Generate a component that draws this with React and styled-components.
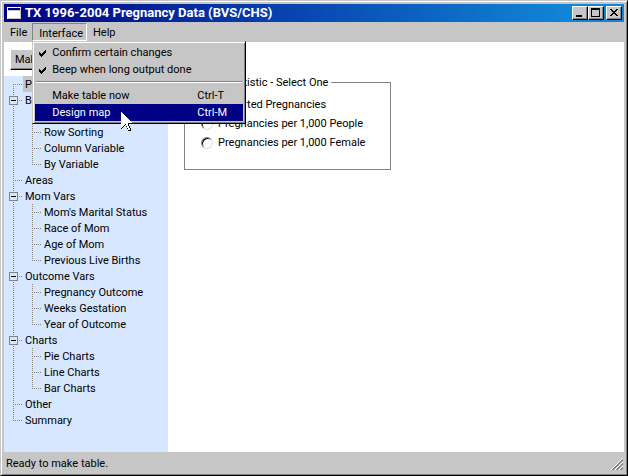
import React, { useState } from 'react';
import styled, { createGlobalStyle, css } from 'styled-components';

const face = '#c6c6c6';
const shade = '#848484';
const navy = '#000084';
const paleBlue = '#d6e7ff';

const GlobalStyle = createGlobalStyle`
  * { box-sizing: border-box; }
  body {
    margin: 0;
    background: ${face};
  }
  body, button, input {
    font-family: Roboto, "Liberation Sans", Arial, sans-serif;
    font-size: 11px;
    line-height: 16px;
    color: #000;
  }
`;

const Window = styled.div`
  display: flex;
  flex-direction: column;
  min-height: 100vh;
  padding: 3px 3px 2px;
  background: ${face};
  border: 1px solid;
  border-color: ${face} #000 #000 ${face};
  box-shadow: inset 1px 1px #fff, inset -1px -1px ${shade};
`;

const TitleBar = styled.header`
  display: flex;
  align-items: center;
  gap: 4px;
  height: 18px;
  padding: 0 2px 0 3px;
  background: linear-gradient(to right, #000084, #1084d6 90%);
`;

const Title = styled.h1`
  flex: 1;
  margin: 0;
  font-size: 13px;
  line-height: 18px;
  font-weight: bold;
  color: #fff;
  white-space: nowrap;
`;

const WindowButtons = styled.div`
  display: flex;
`;

const WindowButton = styled.button`
  width: 16px;
  height: 14px;
  padding: 0;
  background: ${face};
  border: 1px solid;
  border-color: #fff #000 #000 #fff;
  box-shadow: inset -1px -1px ${shade};
  margin-left: ${(props) => (props.$apart ? '2px' : '0')};

  svg { display: block; }
`;

const MenuBar = styled.nav`
  display: flex;
  height: 20px;
  padding: 1px 0;
`;

const MenuHolder = styled.div`
  position: relative;
`;

const MenuButton = styled.button`
  display: block;
  height: 18px;
  padding: 1px 4px 0 5px;
  background: ${face};
  border: 1px solid ${face};

  ${(props) => props.$open && css`
    padding: 2px 3px 0 6px;
    border-color: ${shade} #fff #fff ${shade};
  `}
`;

const Menu = styled.div`
  position: absolute;
  top: 100%;
  left: 0;
  z-index: 1;
  width: 214px;
  padding: 2px;
  background: ${face};
  border: 1px solid;
  border-color: ${face} #000 #000 ${face};
  box-shadow: inset 1px 1px #fff, inset -1px -1px ${shade};
`;

const MenuItem = styled.button`
  display: grid;
  grid-template-columns: 17px 1fr 46px;
  align-items: center;
  width: 100%;
  height: 17px;
  padding: 1px 0 0;
  border: 0;
  text-align: left;
  white-space: nowrap;
  color: ${(props) => (props.$active ? '#fff' : '#000')};
  background: ${(props) => (props.$active ? navy : 'transparent')};
`;

const CheckCell = styled.span`
  display: flex;
  padding-left: 4px;
`;

const Separator = styled.hr`
  height: 2px;
  margin: 3px 1px 4px;
  border: 0;
  border-top: 1px solid ${shade};
  border-bottom: 1px solid #fff;
`;

const Pointer = styled.svg`
  position: absolute;
  top: 70px;
  left: 88px;
  pointer-events: none;
`;

const Toolbar = styled.div`
  height: 34px;
  padding: 7px 6px;
  background: #fff;
`;

const PushButton = styled.button`
  height: 21px;
  padding: 0 4px;
  background: ${face};
  border: 1px solid;
  border-color: #fff #000 #000 #fff;
  box-shadow: inset -1px -1px ${shade};
`;

const Body = styled.div`
  display: flex;
  flex: 1;
  background: #fff;
`;

const Sidebar = styled.aside`
  width: 164px;
  background: ${paleBlue};
`;

const TreeList = styled.ul`
  margin: 0;
  padding: 0;
  list-style: none;
`;

const TreeRow = styled.div`
  display: flex;
  height: 16px;
`;

const TreeLabel = styled.span`
  padding: 0 2px;
  line-height: 18px;
  white-space: nowrap;
  background: ${(props) => (props.$selected ? face : 'transparent')};
`;

const dotsDown = `repeating-linear-gradient(to bottom, ${shade} 0 1px, transparent 1px 2px)`;
const dotsAcross = `repeating-linear-gradient(to right, ${shade} 0 1px, transparent 1px 2px)`;

const guides = {
  first: `${dotsDown} 9px 8px / 1px 8px no-repeat, ${dotsAcross} 9px 8px / 9px 1px no-repeat`,
  middle: `${dotsDown} 9px 0 / 1px 16px no-repeat, ${dotsAcross} 9px 8px / 9px 1px no-repeat`,
  last: `${dotsDown} 9px 0 / 1px 9px no-repeat, ${dotsAcross} 9px 8px / 9px 1px no-repeat`,
  through: `${dotsDown} 9px 0 / 1px 16px no-repeat`,
};

const Guide = styled.span`
  flex: none;
  width: 19px;
  height: 16px;
  padding: 4px 5px;
  background: ${(props) => guides[props.$line]};
`;

const Toggle = styled.button`
  display: block;
  width: 9px;
  height: 9px;
  padding: 0;
  background: ${paleBlue};
  border: 1px solid ${shade};

  svg { display: block; }
`;

const Content = styled.main`
  flex: 1;
  padding: 0 16px;
`;

const GroupBox = styled.fieldset`
  width: 207px;
  min-width: 0;
  height: 94px;
  margin: 0;
  padding: 6px 16px 0;
  border: 1px solid ${shade};
`;

const Legend = styled.legend`
  margin-left: -6px;
  padding: 0 3px;
  line-height: 13px;
  white-space: nowrap;
`;

const RadioRow = styled.label`
  display: flex;
  align-items: center;
  gap: 5px;
  height: 19px;
  white-space: nowrap;
`;

const Radio = styled.input`
  appearance: none;
  flex: none;
  width: 12px;
  height: 12px;
  margin: 0;
  border: 1px solid;
  border-color: ${shade} #dedede #dedede ${shade};
  border-radius: 50%;
  box-shadow: inset 1px 1px #000;
  background: #fff;

  &:checked {
    background: radial-gradient(circle, #000 2px, #fff 3px);
  }
`;

const StatusBar = styled.footer`
  display: flex;
  align-items: center;
  justify-content: space-between;
  height: 21px;
  padding: 2px 1px 0 2px;
`;

const tree = [
  { label: 'Pregnancies' },
  { label: 'Basic Setup', children: ['Row Variable', 'Row Sorting', 'Column Variable', 'By Variable'] },
  { label: 'Areas' },
  { label: 'Mom Vars', children: ["Mom's Marital Status", 'Race of Mom', 'Age of Mom', 'Previous Live Births'] },
  { label: 'Outcome Vars', children: ['Pregnancy Outcome', 'Weeks Gestation', 'Year of Outcome'] },
  { label: 'Charts', children: ['Pie Charts', 'Line Charts', 'Bar Charts'] },
  { label: 'Other' },
  { label: 'Summary' },
];

const statistics = ['Reported Pregnancies', 'Pregnancies per 1,000 People', 'Pregnancies per 1,000 Female'];

function AppIcon() {
  return (
    <svg width="14" height="12" shapeRendering="crispEdges" aria-hidden="true">
      <path fill="#fff" d="M0 0h14v12H0z" />
      <path fill="#c6c6c6" d="M1 1h13v11H1z" />
      <path fill="#000084" d="M1 1h12v2H1z" />
      <path fill="#fff" d="M1 4h12v7H1z" />
    </svg>
  );
}

function Check() {
  return (
    <svg width="7" height="7" shapeRendering="crispEdges" aria-hidden="true">
      <path d="M6 0h1v3H6zM5 1h1v3H5zM4 2h1v3H4zM3 3h1v3H3zM2 4h1v3H2zM1 3h1v3H1zM0 2h1v3H0z" />
    </svg>
  );
}

function ArrowPointer() {
  return (
    <Pointer width="12" height="20" viewBox="0 0 12 20" shapeRendering="crispEdges" aria-hidden="true">
      <path
        fill="#000"
        d="M0 0h1v1h1v1h1v1h1v1h1v1h1v1h1v1h1v1h1v1h1v1h1v1h1v1H8v2h1v2h1v3H7v-2H6v-2H5v-2H4v1H3v1H2v1H1v1H0z"
      />
      <path
        fill="#fff"
        d="M0 0h1v1h1v1h1v1h1v1h1v1h1v1h1v1h1v1h1v1h1v1h1v1H7v3h1v2h1v2H7v-2H6v-2H5v-2H4v1H3v1H2v1H1v1H0z"
      />
    </Pointer>
  );
}

// diagonal ridges: one light pixel, two dark, one empty
function SizeGrip() {
  const pixels = [];
  for (let y = 0; y < 12; y++) {
    for (let x = 11 - y; x < 12; x++) {
      const step = (x + y - 11) % 4;
      if (step < 3) {
        pixels.push(<rect key={`${x}-${y}`} x={x} y={y} width="1" height="1" fill={step === 0 ? '#fff' : shade} />);
      }
    }
  }
  return <svg width="12" height="12" shapeRendering="crispEdges" aria-hidden="true">{pixels}</svg>;
}

function TreeNode({ node, line, selected }) {
  const [open, setOpen] = useState(true);
  const children = node.children || [];

  return (
    <li>
      <TreeRow>
        <Guide $line={line}>
          {children.length > 0 && (
            <Toggle aria-label={node.label} aria-expanded={open} onClick={() => setOpen(!open)}>
              <svg width="7" height="7" shapeRendering="crispEdges">
                <path d={open ? 'M1 3h5v1H1z' : 'M1 3h5v1H1zM3 1h1v5H3z'} />
              </svg>
            </Toggle>
          )}
        </Guide>
        <TreeLabel $selected={selected}>{node.label}</TreeLabel>
      </TreeRow>
      {open && children.length > 0 && (
        <TreeList>
          {children.map((child, i) => (
            <li key={child}>
              <TreeRow>
                <Guide $line="through" />
                <Guide $line={i === children.length - 1 ? 'last' : 'middle'} />
                <TreeLabel>{child}</TreeLabel>
              </TreeRow>
            </li>
          ))}
        </TreeList>
      )}
    </li>
  );
}

function lineFor(i) {
  if (i === 0) return 'first';
  return i === tree.length - 1 ? 'last' : 'middle';
}

export default function App() {
  const [menuOpen, setMenuOpen] = useState(true);
  const [confirm, setConfirm] = useState(true);
  const [beep, setBeep] = useState(true);

  return (
    <>
      <GlobalStyle />
      <Window>
        <TitleBar>
          <AppIcon />
          <Title>TX 1996-2004 Pregnancy Data (BVS/CHS)</Title>
          <WindowButtons>
            <WindowButton aria-label="Minimize">
              <svg width="14" height="12" shapeRendering="crispEdges"><path d="M3 8h6v2H3z" /></svg>
            </WindowButton>
            <WindowButton aria-label="Maximize">
              <svg width="14" height="12" shapeRendering="crispEdges">
                <path fillRule="evenodd" d="M2 1h9v9H2zM3 3v6h7V3z" />
              </svg>
            </WindowButton>
            <WindowButton aria-label="Close" $apart>
              <svg width="14" height="12" shapeRendering="crispEdges">
                <path d="M3 2h2v1h1v1h2V3h1V2h2v1h-1v1H9v1H8v1h1v1h1v1h1v1H9V8H8V7H6v1H5v1H3V8h1V7h1V6h1V5H5V4H4V3H3z" />
              </svg>
            </WindowButton>
          </WindowButtons>
        </TitleBar>

        <MenuBar>
          <MenuButton>File</MenuButton>
          <MenuHolder>
            <MenuButton $open={menuOpen} aria-expanded={menuOpen} onClick={() => setMenuOpen(!menuOpen)}>
              Interface
            </MenuButton>
            {menuOpen && (
              <Menu>
                <MenuItem onClick={() => setConfirm(!confirm)}>
                  <CheckCell>{confirm && <Check />}</CheckCell>
                  <span>Confirm certain changes</span>
                </MenuItem>
                <MenuItem onClick={() => setBeep(!beep)}>
                  <CheckCell>{beep && <Check />}</CheckCell>
                  <span>Beep when long output done</span>
                </MenuItem>
                <Separator />
                <MenuItem>
                  <CheckCell />
                  <span>Make table now</span>
                  <span>Ctrl-T</span>
                </MenuItem>
                <MenuItem $active>
                  <CheckCell />
                  <span>Design map</span>
                  <span>Ctrl-M</span>
                </MenuItem>
                <ArrowPointer />
              </Menu>
            )}
          </MenuHolder>
          <MenuButton>Help</MenuButton>
        </MenuBar>

        <Toolbar>
          <PushButton>Make Table</PushButton>
        </Toolbar>

        <Body>
          <Sidebar>
            <TreeList>
              {tree.map((node, i) => (
                <TreeNode key={node.label} node={node} line={lineFor(i)} selected={i === 0} />
              ))}
            </TreeList>
          </Sidebar>
          <Content>
            <GroupBox>
              <Legend>Table Statistic - Select One</Legend>
              {statistics.map((name) => (
                <RadioRow key={name}>
                  <Radio type="radio" name="statistic" defaultChecked={name === statistics[0]} />
                  {name}
                </RadioRow>
              ))}
            </GroupBox>
          </Content>
        </Body>

        <StatusBar>
          <span>Ready to make table.</span>
          <SizeGrip />
        </StatusBar>
      </Window>
    </>
  );
}
